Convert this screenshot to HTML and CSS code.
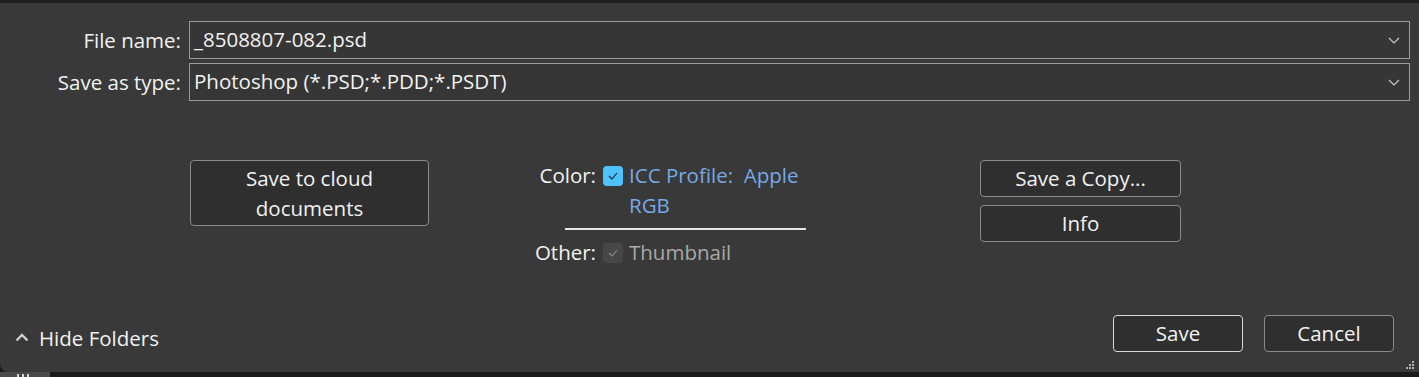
FILE: index.html
```html
<!DOCTYPE html>
<html>
  <head>
    <title>Save As</title>
    <link rel="stylesheet" href="styles.css">
  </head>
  <body>
    <div class="topbar"></div>
    <div class="dialog">
      <div class="fields">
        <label for="filename">File name:</label>
        <div class="combo">
          <span id="filename">_8508807-082.psd</span>
          <svg class="chevron" width="12" height="7" viewBox="0 0 12 7"><path d="M1 1 L6 6 L11 1" fill="none" stroke="#c8c8c8" stroke-width="1.2"/></svg>
        </div>
        <label for="filetype">Save as type:</label>
        <div class="combo">
          <span id="filetype">Photoshop (*.PSD;*.PDD;*.PSDT)</span>
          <svg class="chevron" width="12" height="7" viewBox="0 0 12 7"><path d="M1 1 L6 6 L11 1" fill="none" stroke="#c8c8c8" stroke-width="1.2"/></svg>
        </div>
      </div>

      <div class="options">
        <button class="btn cloud">Save to cloud<br>documents</button>

        <div class="color-opts">
          <div class="opt-row">
            <span class="opt-label">Color:</span>
            <span class="check on">
              <svg width="10" height="8" viewBox="0 0 10 8"><path d="M1 4 L4 7 L9 1" fill="none" stroke="#1a1a1a" stroke-width="1.1"/></svg>
            </span>
            <span class="opt-text link">ICC Profile:&nbsp; Apple<br>RGB</span>
          </div>
          <div class="rule"></div>
          <div class="opt-row">
            <span class="opt-label">Other:</span>
            <span class="check off">
              <svg width="10" height="8" viewBox="0 0 10 8"><path d="M1 4 L4 7 L9 1" fill="none" stroke="#8a8a8a" stroke-width="1.1"/></svg>
            </span>
            <span class="opt-text muted">Thumbnail</span>
          </div>
        </div>

        <div class="side-btns">
          <button class="btn">Save a Copy...</button>
          <button class="btn">Info</button>
        </div>
      </div>

      <div class="footer">
        <div class="hide-folders">
          <svg width="14" height="9" viewBox="0 0 14 9"><path d="M1.5 7.5 L7 2 L12.5 7.5" fill="none" stroke="#d0d0d0" stroke-width="2.4"/></svg>
          <span>Hide Folders</span>
        </div>
        <div class="actions">
          <button class="btn primary">Save</button>
          <button class="btn">Cancel</button>
        </div>
      </div>

      <div class="grip">
        <i></i><i></i><i></i><i></i><i></i><i></i>
      </div>
    </div>
    <div class="bottombar">
      <div class="tab"><i></i><i></i><i></i></div>
    </div>
  </body>
</html>
```

FILE: styles.css
```css
body {
  margin: 0;
  background-color: #1c1c1c;
  font-family: "Open Sans", "Noto Sans", sans-serif;
  font-size: 20.5px;
  color: #f2f2f2;
  height: 377px;
  overflow: hidden;
}

.topbar {
  height: 3px;
  background-color: #1f1f1f;
}

.dialog {
  position: relative;
  height: 369px;
  background-color: #393939;
  border-bottom-left-radius: 8px;
  box-sizing: border-box;
  padding-top: 18px;
}

/* file name / type rows */
.fields {
  display: grid;
  grid-template-columns: 181px 1fr;
  column-gap: 8px;
  row-gap: 4px;
  padding-right: 9px;
}

.fields label {
  text-align: right;
  align-self: center;
}

.combo {
  height: 38px;
  box-sizing: border-box;
  border: 1px solid #9a9a9a;
  background-color: #363636;
  display: flex;
  align-items: center;
  justify-content: space-between;
  padding: 0 8px 0 4px;
}

.combo span {
  margin-top: -2px;
}

.chevron {
  margin-right: 1px;
}

/* middle section */
.options {
  display: flex;
  align-items: flex-start;
  margin-top: 59px;
  padding-left: 190px;
}

.btn {
  font-family: "Open Sans", "Noto Sans", sans-serif;
  font-size: 20.5px;
  color: #f2f2f2;
  background-color: #2f2f2f;
  border: 1px solid #8a8a8a;
  border-radius: 4px;
  height: 37px;
  padding: 0;
  box-sizing: border-box;
  line-height: 1;
}

.cloud {
  width: 239px;
  height: 66px;
  line-height: 30px;
}

.color-opts {
  margin-left: 101px;
  width: 285px;
}

.opt-row {
  display: flex;
  align-items: flex-start;
}

.opt-label {
  width: 66px;
  text-align: right;
  line-height: 30px;
  white-space: nowrap;
}

.check {
  flex: none;
  width: 20px;
  height: 20px;
  box-sizing: border-box;
  border-radius: 4px;
  margin: 6px 6px 0 7px;
  display: flex;
  align-items: center;
  justify-content: center;
}

.check.on {
  background-color: #4cc2ff;
}

.check.off {
  background-color: #474747;
}

.opt-text {
  line-height: 30px;
  white-space: nowrap;
}

.link {
  color: #77a8e6;
}

.muted {
  color: #a8a8a8;
}

.rule {
  height: 2px;
  background-color: #e6e6e6;
  margin: 8px 0 7px 35px;
  width: 241px;
}

.side-btns {
  display: flex;
  flex-direction: column;
  gap: 8px;
  margin-left: 165px;
}

.side-btns .btn {
  width: 201px;
}

/* bottom row */
.footer {
  display: flex;
  justify-content: space-between;
  align-items: center;
  margin-top: 48px;
  padding: 0 25px 0 15px;
}

.hide-folders {
  display: flex;
  align-items: center;
  gap: 10px;
  margin-top: 8px;
}

.actions {
  display: flex;
  gap: 21px;
}

.actions .btn {
  width: 130px;
}

.btn.primary {
  border-color: #d8d8d8;
}

.grip {
  position: absolute;
  right: 4px;
  bottom: 2px;
  width: 9px;
  height: 9px;
  display: grid;
  grid-template-columns: repeat(3, 3px);
  grid-template-rows: repeat(3, 3px);
}

.grip i {
  width: 2px;
  height: 2px;
  background-color: #b0b0b0;
}

.grip i:nth-child(1) { grid-area: 1 / 3; }
.grip i:nth-child(2) { grid-area: 2 / 2; }
.grip i:nth-child(3) { grid-area: 2 / 3; }
.grip i:nth-child(4) { grid-area: 3 / 1; }
.grip i:nth-child(5) { grid-area: 3 / 2; }
.grip i:nth-child(6) { grid-area: 3 / 3; }

.bottombar {
  height: 5px;
  background-color: #1a1a1a;
}

.tab {
  width: 50px;
  height: 5px;
  background-color: #4a4a4a;
  display: flex;
  gap: 3px;
  padding: 2px 0 0 17px;
  box-sizing: border-box;
}

.tab i {
  width: 2px;
  height: 3px;
  background-color: #d8d8d8;
}
```
